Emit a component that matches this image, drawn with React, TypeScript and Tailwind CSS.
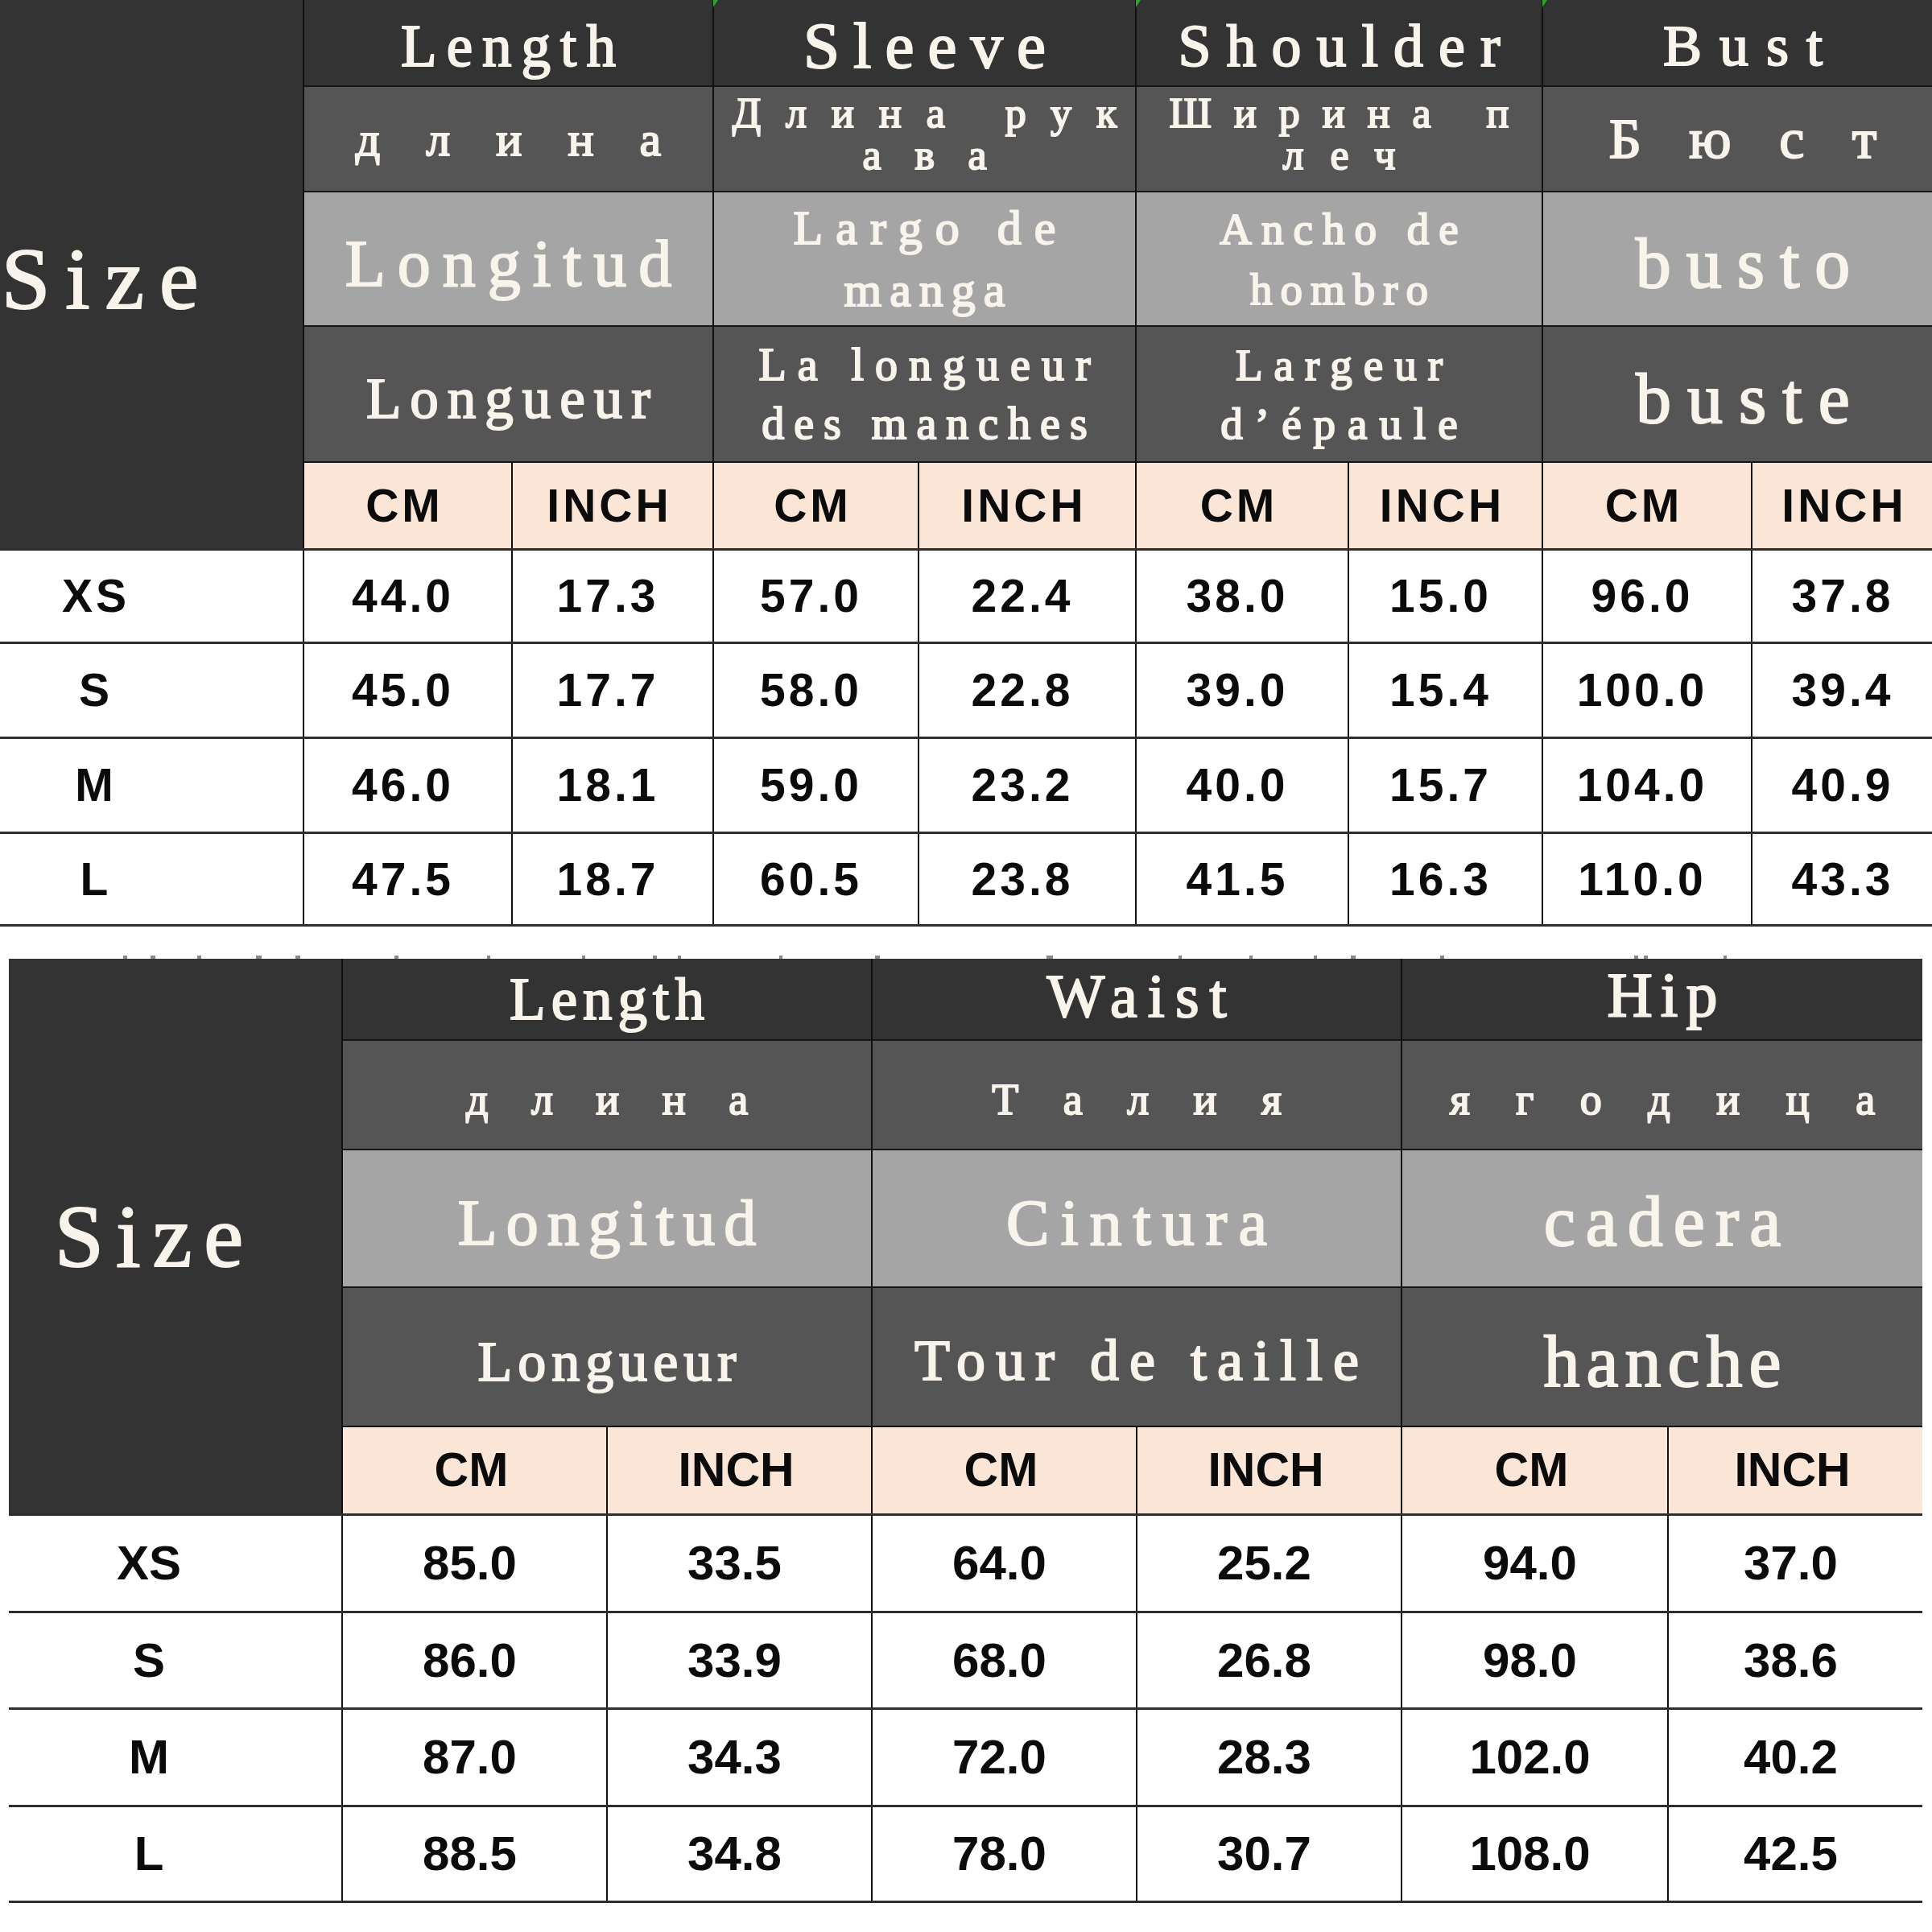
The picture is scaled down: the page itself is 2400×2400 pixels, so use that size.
import React from "react";

type Line = [string, string];
type HC = { lines: Line[]; box?: string };
type Group = { w: string; inch: string; rows: HC[] };

const SERIF =
  "[font-family:'Liberation_Serif','Times_New_Roman',serif] text-[#f8f4ec] [-webkit-text-stroke:2px_#f8f4ec] whitespace-pre shrink-0";
const SANS =
  "[font-family:'Liberation_Sans',Arial,sans-serif] font-bold text-[#0b0b0b] leading-none whitespace-pre";

const TOP_ROWS = [
  "h-[106px] bg-[#333333]",
  "h-[131px] bg-[#555555] border-t-2 border-[#161616]",
  "h-[167px] bg-[#a5a5a5] border-t-2 border-[#161616]",
  "h-[169px] bg-[#555555] border-t-2 border-[#161616]",
];
const TOP_UNIT = "h-[108px] bg-[#fbe5d6] border-t-2 border-[#161616]";

const BOT_ROWS = [
  "h-[100px] bg-[#333333]",
  "h-[136px] bg-[#555555] border-t-2 border-[#161616]",
  "h-[171px] bg-[#a5a5a5] border-t-2 border-[#161616]",
  "h-[173px] bg-[#555555] border-t-2 border-[#161616]",
];
const BOT_UNIT = "h-[109px] bg-[#fbe5d6] border-t-2 border-[#161616]";

const TOP_GROUPS: Group[] = [
  {
    w: "w-[509px]",
    inch: "w-[250px]",
    rows: [
      { lines: [["Length", "text-[73px] leading-none tracking-[12px] pl-[12px]"]], box: "pt-2" },
      { lines: [["д л и н а", "text-[60px] leading-none tracking-[21px] pl-[21px]"]] },
      { lines: [["Longitud", "text-[82px] leading-none tracking-[15px] pl-[15px]"]], box: "pt-3" },
      { lines: [["Longueur", "text-[71px] leading-none tracking-[11px] pl-[11px]"]], box: "pt-3" },
    ],
  },
  {
    w: "w-[525px]",
    inch: "w-[270px]",
    rows: [
      { lines: [["Sleeve", "text-[81px] leading-none tracking-[17px] pl-[17px]"]], box: "pt-2" },
      {
        lines: [
          ["Длина рук", "text-[52px] leading-[52px] tracking-[31px] pl-[31px]"],
          ["ава", "text-[52px] leading-[52px] tracking-[42px] pl-[42px]"],
        ],
        box: "pb-3",
      },
      {
        lines: [
          ["Largo de", "text-[60px] leading-[77px] tracking-[16px] pl-[16px]"],
          ["manga", "text-[60px] leading-[77px] tracking-[10px] pl-[10px]"],
        ],
      },
      {
        lines: [
          ["La longueur", "text-[56px] leading-[73px] tracking-[14px] pl-[14px]"],
          ["des manches", "text-[56px] leading-[73px] tracking-[12px] pl-[12px]"],
        ],
      },
    ],
  },
  {
    w: "w-[505px]",
    inch: "w-[241px]",
    rows: [
      { lines: [["Shoulder", "text-[74px] leading-none tracking-[19px] pl-[19px]"]], box: "pt-2" },
      {
        lines: [
          ["Ширина п", "text-[52px] leading-[52px] tracking-[28px] pl-[28px]"],
          ["леч", "text-[52px] leading-[52px] tracking-[33px] pl-[33px]"],
        ],
        box: "pb-3",
      },
      {
        lines: [
          ["Ancho de", "text-[55px] leading-[75px] tracking-[12px] pl-[12px]"],
          ["hombro", "text-[55px] leading-[75px] tracking-[10px] pl-[10px]"],
        ],
      },
      {
        lines: [
          ["Largeur", "text-[55px] leading-[73px] tracking-[14px] pl-[14px]"],
          ["d’épaule", "text-[55px] leading-[73px] tracking-[15px] pl-[15px]"],
        ],
      },
    ],
  },
  {
    w: "w-[498px]",
    inch: "w-[238px]",
    rows: [
      { lines: [["Bust", "text-[72px] leading-none tracking-[22px] pl-[22px]"]], box: "pt-2" },
      { lines: [["Б ю с т", "text-[70px] leading-none tracking-[21px] pl-[21px]"]] },
      { lines: [["busto", "text-[88px] leading-none tracking-[19px] pl-[19px]"]], box: "pt-3" },
      { lines: [["buste", "text-[88px] leading-none tracking-[20px] pl-[20px]"]], box: "pt-3" },
    ],
  },
];

const BOT_GROUPS: Group[] = [
  {
    w: "w-[658px]",
    inch: "w-[329px]",
    rows: [
      { lines: [["Length", "text-[73px] leading-none tracking-[7px] pl-[7px]"]] },
      { lines: [["д л и н а", "text-[54px] leading-none tracking-[20px] pl-[20px]"]], box: "pt-3" },
      { lines: [["Longitud", "text-[80px] leading-none tracking-[11px] pl-[11px]"]], box: "pt-2.5" },
      { lines: [["Longueur", "text-[70px] leading-none tracking-[7px] pl-[7px]"]], box: "pt-3" },
    ],
  },
  {
    w: "w-[658px]",
    inch: "w-[329px]",
    rows: [
      { lines: [["Waist", "text-[76px] leading-none tracking-[13px] pl-[13px]"]], box: "pb-2" },
      { lines: [["Т а л и я", "text-[54px] leading-none tracking-[21px] pl-[21px]"]], box: "pt-3" },
      { lines: [["Cintura", "text-[80px] leading-none tracking-[14px] pl-[14px]"]], box: "pt-2.5" },
      { lines: [["Tour de taille", "text-[72px] leading-none tracking-[13px] pl-[13px]"]], box: "pt-2" },
    ],
  },
  {
    w: "w-[648px]",
    inch: "w-[317px]",
    rows: [
      { lines: [["Hip", "text-[78px] leading-none tracking-[10px] pl-[10px]"]], box: "pb-2.5" },
      { lines: [["я г о д и ц а", "text-[54px] leading-none tracking-[22px] pl-[22px]"]], box: "pt-3" },
      { lines: [["cadera", "text-[88px] leading-none tracking-[13px] pl-[13px]"]], box: "pt-2" },
      { lines: [["hanche", "text-[90px] leading-none tracking-[8px] pl-[8px]"]], box: "pt-3" },
    ],
  },
];

const TOP_DATA = [
  ["XS", "44.0", "17.3", "57.0", "22.4", "38.0", "15.0", "96.0", "37.8"],
  ["S", "45.0", "17.7", "58.0", "22.8", "39.0", "15.4", "100.0", "39.4"],
  ["M", "46.0", "18.1", "59.0", "23.2", "40.0", "15.7", "104.0", "40.9"],
  ["L", "47.5", "18.7", "60.5", "23.8", "41.5", "16.3", "110.0", "43.3"],
];
const TOP_W = ["w-[259px]", "w-[250px]", "w-[255px]", "w-[270px]", "w-[264px]", "w-[241px]", "w-[260px]", "w-[238px]"];
const TOP_RH = ["h-[116px]", "h-[118px]", "h-[118px]", "h-[118px] border-b-[3px]"];

const BOT_DATA = [
  ["XS", "85.0", "33.5", "64.0", "25.2", "94.0", "37.0"],
  ["S", "86.0", "33.9", "68.0", "26.8", "98.0", "38.6"],
  ["M", "87.0", "34.3", "72.0", "28.3", "102.0", "40.2"],
  ["L", "88.5", "34.8", "78.0", "30.7", "108.0", "42.5"],
];
const BOT_W = ["w-[329px]", "w-[329px]", "w-[329px]", "w-[329px]", "w-[331px]", "w-[317px]"];
const BOT_RH = ["h-[121px]", "h-[120px]", "h-[121px]", "h-[122px] border-b-[3px]"];

const TICKS: [number, number][] = [
  [153, 5], [187, 6], [245, 5], [318, 7], [367, 6], [490, 5], [605, 4], [723, 4], [811, 5], [842, 4],
  [968, 4], [1087, 6], [1300, 8], [1464, 4], [1552, 4], [1632, 4], [1678, 6], [1789, 5], [2030, 5],
  [2042, 5], [2141, 4],
];

function HeaderCell({ cell, row }: { cell: HC; row: string }) {
  return (
    <div className={`${row} flex flex-col items-center justify-center ${cell.box ?? ""}`}>
      {cell.lines.map(([t, c], i) => (
        <div key={i} className={`${SERIF} ${c}`}>
          {t}
        </div>
      ))}
    </div>
  );
}

type TableProps = {
  width: string;
  sizeCell: string;
  labelCell: string;
  sizeText: string;
  groups: Group[];
  rows: string[];
  unit: string;
  unitText: string;
  data: string[][];
  widths: string[];
  rowH: string[];
  numText: string;
};

function SizeTable(p: TableProps) {
  return (
    <div className={`${p.width} flex flex-col shrink-0`}>
      <div className="flex">
        <div className={`${p.sizeCell} bg-[#333333] flex items-center justify-center shrink-0`}>
          <div className={`${SERIF} leading-none ${p.sizeText}`}>Size</div>
        </div>
        {p.groups.map((g, gi) => (
          <div key={gi} className={`${g.w} flex flex-col border-l-2 border-[#111111] shrink-0`}>
            {g.rows.map((c, ri) => (
              <HeaderCell key={ri} cell={c} row={p.rows[ri]} />
            ))}
            <div className={`${p.unit} flex`}>
              <div className="flex-1 flex items-center justify-center pr-2">
                <span className={`${SANS} ${p.unitText}`}>CM</span>
              </div>
              <div className={`${g.inch} border-l-2 border-[#111111] flex items-center justify-center pr-2`}>
                <span className={`${SANS} ${p.unitText}`}>INCH</span>
              </div>
            </div>
          </div>
        ))}
      </div>
      {p.data.map((row, ri) => (
        <div key={ri} className={`flex bg-white border-t-[3px] border-[#2e2e2e] ${p.rowH[ri]}`}>
          <div className={`${p.labelCell} flex items-center justify-center shrink-0`}>
            <span className={`${SANS} ${p.numText}`}>{row[0]}</span>
          </div>
          {row.slice(1).map((v, ci) => (
            <div
              key={ci}
              className={`${p.widths[ci]} border-l-2 border-[#111111] flex items-center justify-center pr-3 shrink-0`}
            >
              <span className={`${SANS} ${p.numText}`}>{v}</span>
            </div>
          ))}
        </div>
      ))}
    </div>
  );
}

export default function App() {
  return (
    <div className="relative w-[2400px] h-[2400px] bg-white overflow-hidden flex flex-col">
      <SizeTable
        width="w-[2413px]"
        sizeCell="w-[376px] pr-[128px]"
        labelCell="w-[376px] pr-[138px]"
        sizeText="text-[109px] tracking-[19px] pl-[19px] pt-3"
        groups={TOP_GROUPS}
        rows={TOP_ROWS}
        unit={TOP_UNIT}
        unitText="text-[57px] tracking-[4px]"
        data={TOP_DATA}
        widths={TOP_W}
        rowH={TOP_RH}
        numText="text-[57px] tracking-[4px]"
      />

      <div className="h-[40px] flex flex-col justify-end shrink-0">
        <svg width="2400" height="6" viewBox="0 0 2400 6" className="block">
          {TICKS.map(([x, w], i) => (
            <rect key={i} x={x} y={2} width={w} height={4} fill="#3c3c3c" opacity={0.6} />
          ))}
        </svg>
      </div>

      <div className="ml-[11px]">
        <SizeTable
          width="w-[2377px]"
          sizeCell="w-[413px] pr-[65px]"
          labelCell="w-[413px] pr-[65px]"
          sizeText="text-[110px] tracking-[15px] pl-[15px]"
          groups={BOT_GROUPS}
          rows={BOT_ROWS}
          unit={BOT_UNIT}
          unitText="text-[59px]"
          data={BOT_DATA}
          widths={BOT_W}
          rowH={BOT_RH}
          numText="text-[60px]"
        />
      </div>

      <div className="absolute left-[886px] top-0 w-[6px] h-[9px] bg-[#2aa52a] [clip-path:polygon(0_0,100%_0,0_100%)]" />
      <div className="absolute left-[1411px] top-0 w-[6px] h-[9px] bg-[#2aa52a] [clip-path:polygon(0_0,100%_0,0_100%)]" />
      <div className="absolute left-[1916px] top-0 w-[6px] h-[9px] bg-[#2aa52a] [clip-path:polygon(0_0,100%_0,0_100%)]" />
    </div>
  );
}
